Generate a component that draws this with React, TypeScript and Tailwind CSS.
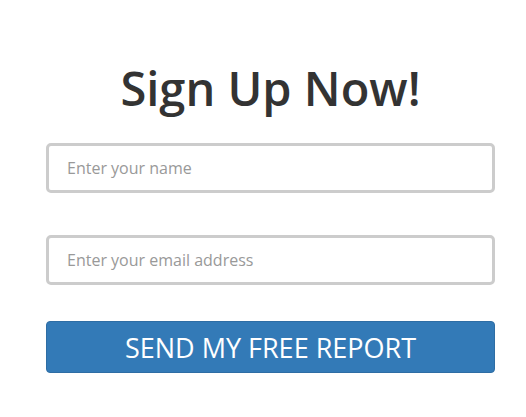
export default function App() {
  return (
    <div className="min-h-screen bg-white font-['Open_Sans',sans-serif]">
      <div className="ml-[46px] w-[449px] pt-[56px]">
        <h1 className="text-center text-[47px] font-semibold leading-[64px] text-[#333333]">Sign Up Now!</h1>
        <form className="mt-[23px] flex flex-col">
          <input
            type="text"
            placeholder="Enter your name"
            className="h-[50px] w-full rounded-[5px] border-[3px] border-[#cccccc] bg-white px-[18px] text-[16px] text-[#555] outline-none placeholder:text-[#999999]"
          />
          <input
            type="email"
            placeholder="Enter your email address"
            className="mt-[42px] h-[50px] w-full rounded-[5px] border-[3px] border-[#cccccc] bg-white px-[18px] text-[16px] text-[#555] outline-none placeholder:text-[#999999]"
          />
          <button
            type="button"
            className="mt-[36px] h-[52px] w-full rounded-[4px] border border-[#2e6da4] bg-[#337ab7] text-[27px] uppercase leading-none text-white"
          >
            Send My Free Report
          </button>
        </form>
      </div>
    </div>
  );
}
